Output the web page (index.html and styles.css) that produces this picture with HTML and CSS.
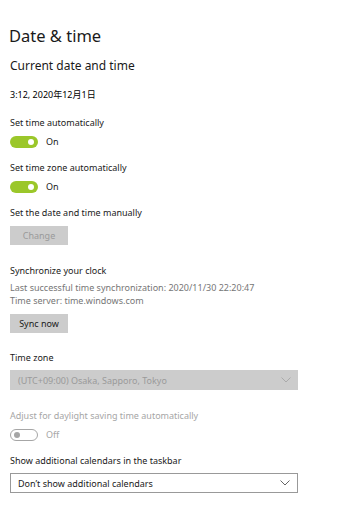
FILE: index.html
```html
<!DOCTYPE html>
<html>
<head>
<meta charset="utf-8">
<link rel="stylesheet" href="styles.css">
</head>
<body>
<div class="page">
  <h1 class="title">Date &amp; time</h1>
  <h2 class="subtitle">Current date and time</h2>
  <div class="now">3:12, 2020年12月1日</div>

  <div class="setting s-auto">
    <div class="label">Set time automatically</div>
    <div class="toggle-row"><span class="toggle on"><span class="knob"></span></span><span class="state">On</span></div>
  </div>

  <div class="setting s-zone">
    <div class="label">Set time zone automatically</div>
    <div class="toggle-row"><span class="toggle on"><span class="knob"></span></span><span class="state">On</span></div>
  </div>

  <div class="setting s-manual">
    <div class="label">Set the date and time manually</div>
    <button class="btn disabled">Change</button>
  </div>

  <div class="setting s-sync">
    <div class="label">Synchronize your clock</div>
    <div class="info">Last successful time synchronization: 2020/11/30 22:20:47</div>
    <div class="info">Time server: time.windows.com</div>
    <button class="btn">Sync now</button>
  </div>

  <div class="setting s-tz">
    <div class="label">Time zone</div>
    <div class="select disabled"><span>(UTC+09:00) Osaka, Sapporo, Tokyo</span>
      <svg class="chev" width="10" height="6" viewBox="0 0 10 6"><path d="M0.5 0.5 L5 5 L9.5 0.5" fill="none" stroke="currentColor" stroke-width="1"/></svg></div>
  </div>

  <div class="setting s-dst">
    <div class="label muted">Adjust for daylight saving time automatically</div>
    <div class="toggle-row"><span class="toggle off"><span class="knob"></span></span><span class="state muted">Off</span></div>
  </div>

  <div class="setting s-cal">
    <div class="label">Show additional calendars in the taskbar</div>
    <div class="select"><span>Don’t show additional calendars</span>
      <svg class="chev" width="10" height="6" viewBox="0 0 10 6"><path d="M0.5 0.5 L5 5 L9.5 0.5" fill="none" stroke="currentColor" stroke-width="1"/></svg></div>
  </div>
</div>
</body>
</html>
```

FILE: styles.css
```css
html, body { margin: 0; padding: 0; background: #ffffff; }
body {
  font-family: "Noto Sans", "Open Sans", "Noto Sans CJK JP", sans-serif;
  color: #000;
  font-size: 9px;
  line-height: 13px;
}
.page { padding: 24px 0 0 10px; width: 288px; }
.title {
  margin: 0 0 0 -1px;
  font-size: 16.5px; line-height: 24px; font-weight: 400;
  color: #1a1a1a;
}
.subtitle {
  margin: 9px 0 0 0;
  font-size: 12px; line-height: 18px; font-weight: 400;
  color: #1a1a1a;
}
.now { margin-top: 13px; font-size: 9px; }
.setting { display: flex; flex-direction: column; align-items: flex-start; }
.label { font-size: 9px; line-height: 13px; color: #1a1a1a; }
.muted { color: #a6a6a6; }
.s-auto { margin-top: 15px; }
.s-zone { margin-top: 13px; }
.s-manual { margin-top: 13px; }
.s-sync { margin-top: 19px; }
.s-tz { margin-top: 18px; }
.s-dst { margin-top: 19px; }
.s-cal { margin-top: 13px; }
.toggle-row { display: flex; align-items: center; gap: 8px; margin-top: 6px; height: 13px; }
.toggle {
  box-sizing: border-box; width: 28px; height: 12px; border-radius: 6px;
  position: relative; display: inline-block;
}
.toggle.on { background: #9bc72a; }
.toggle.off { border: 1.5px solid #a6a6a6; background: #fff; }
.knob { position: absolute; width: 6px; height: 6px; border-radius: 50%; top: 50%; transform: translateY(-50%); }
.toggle.on .knob { background: #fff; right: 4px; }
.toggle.off .knob { background: #a6a6a6; left: 3px; }
.state { font-size: 9px; color: #1a1a1a; }
.state.muted { color: #a6a6a6; }
.btn {
  margin-top: 7px; width: 58px; height: 19px; border: 0; padding: 0;
  background: #cccccc; font-family: inherit; font-size: 9px; color: #1a1a1a;
}
.btn.disabled { color: #9a9a9a; }
.info { font-size: 9px; line-height: 13px; color: #767676; margin-top: 4px; }
.info + .info { margin-top: 0; }
.s-sync .btn { margin-top: 7px; }
.select {
  box-sizing: border-box; margin-top: 6px; width: 288px; height: 20px;
  display: flex; align-items: center; justify-content: space-between;
  padding: 0 7px 0 7px; font-size: 9px; color: #1a1a1a;
  border: 1.5px solid #999999; background: #fff;
}
.select.disabled { border: 0; background: #cccccc; color: #9a9a9a; padding-left: 8px; }
.chev { color: #666; }
.select.disabled .chev { color: #aaa; }
```
